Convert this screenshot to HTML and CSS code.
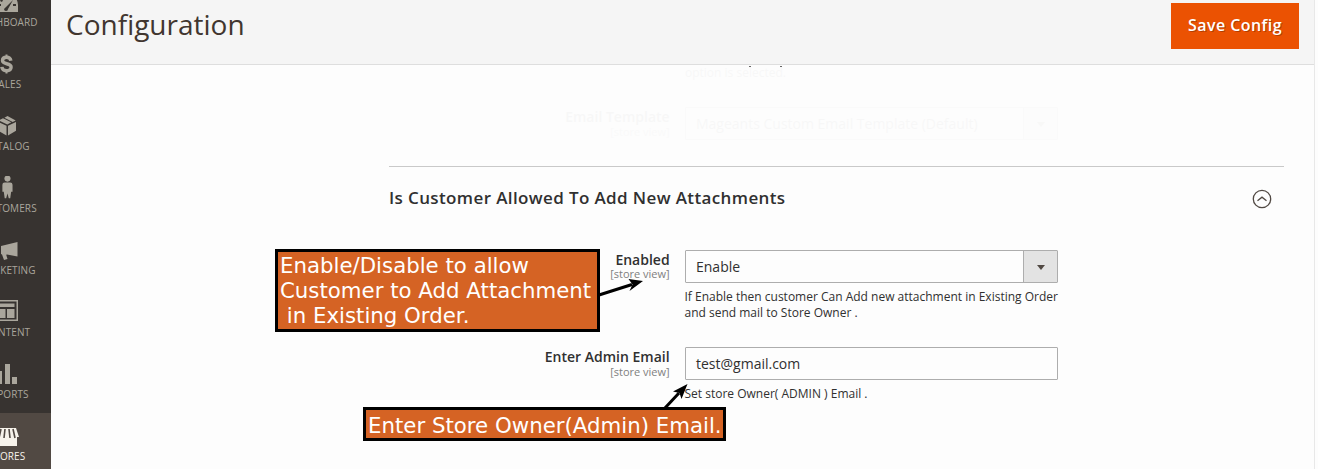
FILE: index.html
```html
<!DOCTYPE html>
<html lang="en">
<head>
<meta charset="utf-8">
<title>Configuration</title>
<link rel="stylesheet" href="styles.css">
</head>
<body>
<div class="page">
  <aside class="sidebar">
    <nav class="menu">
      <a class="item"><svg class="icon" width="24" height="24" viewBox="0 0 24 24"><path fill-rule="evenodd" d="M1 22V15a11 11 0 0 1 22 0v7zM9 19a2 2 0 0 0 4 0l5-9-7 7zM3 16h3v-2H3zM5 11l2 1 1-2-2-1zM11 8h2V5h-2zM18 16h3v-2h-3z"/></svg><span>Dashboard</span></a>
      <a class="item"><svg class="icon" width="24" height="24" viewBox="0 0 24 24"><path d="M15.900 8.700C15.500 6.500 14 5.300 11.500 5.300s-4 1.200-4 3.300c0 4.500 8.600 1.700 8.600 6.500 0 2.300-1.900 3.700-4.600 3.700-2.600 0-4.400-1.400-4.700-3.900" fill="none" stroke="currentColor" stroke-width="3.400"/><path d="M10.500 2.500h2V6h-2zM10.500 18h2v3.500h-2z"/></svg><span>Sales</span></a>
      <a class="item"><svg class="icon" width="24" height="24" viewBox="0 0 24 24"><path d="M3.500 8l8 3.800v9.700l-8-4.700zM21 8l-8 3.800v9.700l8-4.700zM3.800 6.500L8 4.300l8.300 4-4 2.100zM9.400 3.700L12.500 2l8.200 4.500-3 1.500z"/></svg><span>Catalog</span></a>
      <a class="item"><svg class="icon" width="24" height="26" viewBox="0 0 24 26"><circle cx="12.500" cy="2.800" r="3.300"/><path d="M9.500 7h6q2.500 0 2.500 2.500V17h-1.500l-1 7h-1.600l-1.400-5-1.400 5H9.500l-1-7H7V9.500Q7 7 9.500 7z"/></svg><span>Customers</span></a>
      <a class="item"><svg class="icon" width="24" height="24" viewBox="0 0 24 24"><path d="M6 8l16.500-4v14.500L12 16.500l-.8.3L12.500 21 9 22 7 16.500l-1-.6z"/></svg><span>Marketing</span></a>
      <a class="item"><svg class="icon" width="24" height="24" viewBox="0 0 24 24"><path fill-rule="evenodd" d="M2 0h21v21H2zM3.500 1.500v18h18v-18z"/><path d="M5 3.500h14.500V7H5zM5 9h5.500v9H5zM12 9h7.500v9H12z"/></svg><span>Content</span></a>
      <a class="item"><svg class="icon" width="24" height="24" viewBox="0 0 24 24"><path d="M3 9h4v13H3zM10 2h5v20h-5zM17 15h5v7h-5z"/></svg><span>Reports</span></a>
      <a class="item active"><svg class="icon" width="26" height="24" viewBox="0 0 26 24"><path d="M4 4h18l3 9h-2v9H3v-9H1z"/><path d="M7 5L5 14M11 5l-1 9M15 5l1 9M19 5l2 9" stroke="#514943" stroke-width="1.600"/></svg><span>Stores</span></a>
    </nav>
  </aside>
  <main class="main">
    <header class="header">
      <h1 class="title">Configuration</h1>
      <button class="save">Save Config</button>
    </header>
    <div class="content">
      <div class="fading">
        <p class="note clipped">option is selected.</p>
        <div class="field">
          <div class="label"><b>Email Template</b><small>[store view]</small></div>
          <div class="control"><div class="select"><span>Mageants Custom Email Template (Default)</span><i class="toggle"></i></div></div>
        </div>
      </div>
      <section class="section">
        <div class="section-head">
          <h2 class="section-title">Is Customer Allowed To Add New Attachments</h2>
          <svg class="collapse" width="20" height="20" viewBox="0 0 20 20"><circle cx="10" cy="10" r="8.700"/><path d="M5.500 11.800L10 8.200l4.500 3.600"/></svg>
        </div>
        <div class="field first">
          <div class="label"><b>Enabled</b><small>[store view]</small></div>
          <div class="control">
            <div class="select"><span>Enable</span><i class="toggle"></i></div>
            <p class="note">If Enable then customer Can Add new attachment in Existing Order and send mail to Store Owner .</p>
          </div>
        </div>
        <div class="field second">
          <div class="label"><b>Enter Admin Email</b><small>[store view]</small></div>
          <div class="control">
            <div class="input">test@gmail.com</div>
            <p class="note">Set store Owner( ADMIN ) Email .</p>
          </div>
        </div>
      </section>
    </div>
  </main>
  <svg class="arrows" width="1318" height="469" viewBox="0 0 1318 469">
    <path d="M749 66h2M780 66h2" transform="translate(0 .5)" stroke="#666" stroke-width="1"/>
    <path d="M599 295L632 284.500M665 408L679 393" fill="none" stroke="#000" stroke-width="3"/>
    <path d="M643 281L628.500 279l4 5.500-3 6.500zM687.500 384L673 391.500l6.500 1.500 2 6z"/>
  </svg>
  <div class="callout enable">Enable/Disable to allow
Customer to Add Attachment
 in Existing Order.</div>
  <div class="callout email">Enter Store Owner(Admin) Email.</div>
</div>
</body>
</html>
```

FILE: styles.css
```css
* { box-sizing: border-box; }
body { margin: 0; background: #fdfdfd; font-family: "Open Sans", sans-serif; color: #303030; }
h1, h2, p { margin: 0; font-weight: 400; }
.page { position: relative; display: flex; width: 1318px; height: 469px; overflow: hidden; }

.sidebar { flex: 0 0 51px; overflow: hidden; background: #373330; }
.menu { width: 88px; margin: -21px 0 0 -37px; }
.item { display: flex; flex-direction: column; align-items: center; height: 62px; padding-top: 11px; color: #aaa69c; font-size: 10px; line-height: 14px; text-transform: uppercase; }
.item span { margin-top: 1px; letter-spacing: .1px; }
.icon { height: 24px; fill: currentColor; }
.item.active { background: #514943; color: #f7f3eb; }

.main { flex: 0 0 1264px; border-right: 1px solid #e8e8e8; }
.header { display: flex; justify-content: space-between; height: 65px; padding: 3px 15px 0; background: #f5f5f5; border-bottom: 1px solid #dedede; }
.title { font-size: 28px; line-height: 42px; color: #41362f; }
.save { width: 128px; height: 46px; padding: 0 0 2px; border: 0; background: #eb5202; color: #fff; font: 600 16px/44px "Open Sans", sans-serif; letter-spacing: .45px; text-shadow: 1px 1px 0 rgba(0, 0, 0, .25); }

.content { padding: 0 30px 0 338px; }
.fading { height: 101px; overflow: hidden; opacity: .025; }
.clipped { margin-left: 296px; }
.fading .clipped { margin-top: 0; }
.fading .field { margin-top: 26px; }
.section { border-top: 1px solid #c9c9c9; }
.section-head { display: flex; justify-content: space-between; height: 64px; padding: 19px 12px 0 0; }
.section-title { font-size: 17px; font-weight: 600; letter-spacing: .38px; line-height: 24px; }
.collapse { fill: none; stroke: #514943; stroke-width: 1.300; margin-top: 3px; }
.field { display: flex; gap: 15px; }
.field.first { margin-top: 19px; height: 97px; }
.label { width: 281px; padding-right: .4px; text-align: right; }
.label b { display: block; font-size: 14px; font-weight: 600; line-height: 20px; }
.label small { display: block; margin-top: -1px; font-size: 11px; line-height: 11px; color: #808080; }
.first .label small { margin-top: -2px; }
.control { width: 373px; }
.select, .input { display: flex; justify-content: space-between; height: 33px; padding-left: 10px; border: 1px solid #adadad; border-radius: 1px; background: #fdfdfd; font-size: 14px; line-height: 32px; }
.toggle { display: flex; align-items: center; justify-content: center; width: 34px; border-left: 1px solid #adadad; background: #e3e3e3; }
.toggle::after { content: ""; margin-top: 2px; border: 4px solid transparent; border-top: 5px solid #514943; border-bottom: 0; }
.note { margin-top: 6px; font-size: 12px; line-height: 16px; }
.control .note { width: 378px; margin-left: -.5px; }

.arrows { position: absolute; left: 0; top: 0; }
.callout { position: absolute; border: 3px solid #000; background: #d56324; color: #fff; font: 21.300px/25px "DejaVu Sans", sans-serif; white-space: pre; padding: 1px 2px; }
.enable { left: 275px; top: 249px; width: 325px; height: 83px; }
.email { left: 363px; top: 407px; width: 363px; height: 34px; padding-top: 3px; }
```
